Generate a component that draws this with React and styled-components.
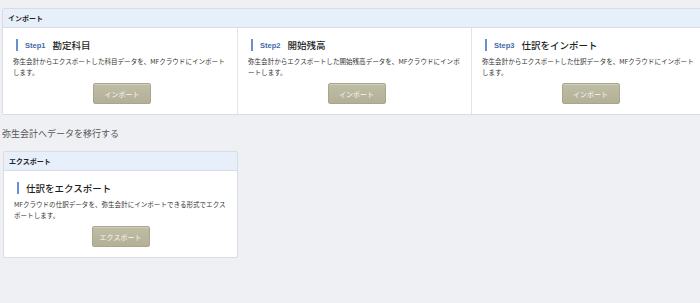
import React from 'react'
import styled, { createGlobalStyle } from 'styled-components'

const GlobalStyle = createGlobalStyle`
    html, body {
        margin: 0;
        padding: 0;
        background: #eef0f4;
        overflow: hidden;
    }
`;

const steps = [
    { step: 'Step1', title: '勘定科目', text: '弥生会計からエクスポートした科目データを、MFクラウドにインポートします。' },
    { step: 'Step2', title: '開始残高', text: '弥生会計からエクスポートした開始残高データを、MFクラウドにインポートします。' },
    { step: 'Step3', title: '仕訳をインポート', text: '弥生会計からエクスポートした仕訳データを、MFクラウドにインポートします。' },
]

const App = () => {
    return (
        <Page>
            <GlobalStyle />
            <Panel wide>
                <PanelHeader>インポート</PanelHeader>
                <StepGrid>
                    {steps.map(s => (
                        <StepCol key={s.step} tight>
                            <StepTitle>
                                <StepLabel>{s.step}</StepLabel>
                                {s.title}
                            </StepTitle>
                            <Desc>{s.text}</Desc>
                            <ButtonRow>
                                <ActionButton type='button'>インポート</ActionButton>
                            </ButtonRow>
                        </StepCol>
                    ))}
                </StepGrid>
            </Panel>

            <SectionHeading>弥生会計へデータを移行する</SectionHeading>

            <Panel>
                <PanelHeader>エクスポート</PanelHeader>
                <StepCol>
                    <StepTitle>仕訳をエクスポート</StepTitle>
                    <Desc>MFクラウドの仕訳データを、弥生会計にインポートできる形式でエクスポートします。</Desc>
                    <ButtonRow>
                        <ActionButton type='button'>エクスポート</ActionButton>
                    </ButtonRow>
                </StepCol>
            </Panel>
        </Page>
    )
}

const Page = styled.div`
    width: 700px;
    height: 303px;
    box-sizing: border-box;
    padding: 8px 0 0 2px;
    overflow: hidden;
    font-family: "Noto Sans CJK JP", "Liberation Sans", sans-serif;
    color: #333;
`;

const Panel = styled.section`
    width: ${p => (p.wide ? '708px' : '235px')};
    background: #fff;
    border: 1px solid #d9dde3;
    border-radius: 2px;
    box-sizing: border-box;
    margin-left: ${p => (p.wide ? '0' : '1px')};
`;

const PanelHeader = styled.header`
    height: 18px;
    display: flex;
    align-items: center;
    padding-left: 5px;
    background: #e7effa;
    border-bottom: 1px solid #d9dde3;
    font-size: 7px;
    font-weight: bold;
    color: #222;
`;

const StepGrid = styled.div`
    display: grid;
    grid-template-columns: 234px 234px 234px;
`;

const StepCol = styled.div`
    padding: 11px ${p => (p.tight ? '6px' : '10px')} 10px 10px;
    & + & {
        border-left: 1px solid #e1e4e9;
    }
`;

const StepTitle = styled.h3`
    margin: 0;
    height: 12px;
    display: flex;
    align-items: center;
    border-left: 2px solid #6b8fcf;
    padding-left: 7px;
    margin-left: 3px;
    font-size: 9.5px;
    font-weight: 500;
    color: #1e1e1e;
`;

const StepLabel = styled.span`
    font-family: "Liberation Sans", sans-serif;
    font-size: 7.5px;
    font-weight: bold;
    color: #3f69a8;
    margin-right: 7px;
`;

const Desc = styled.p`
    margin: 5px 0 0 0;
    font-size: 6.55px;
    line-height: 11px;
    color: #333;
`;

const ButtonRow = styled.div`
    display: flex;
    justify-content: center;
    margin-top: 5px;
`;

const ActionButton = styled.button`
    width: 58px;
    height: 21px;
    padding: 0;
    border: 1px solid #a9a68d;
    border-radius: 2px;
    background: linear-gradient(#c0bda6, #b3b097);
    box-shadow: inset 0 1px 0 rgba(255, 255, 255, 0.25);
    color: #f7f6f0;
    font-family: "Noto Sans CJK JP", sans-serif;
    font-size: 7px;
`;

const SectionHeading = styled.h2`
    margin: 0;
    height: 36px;
    display: flex;
    align-items: center;
    font-size: 9px;
    font-weight: normal;
    color: #555;
`;

export default App
